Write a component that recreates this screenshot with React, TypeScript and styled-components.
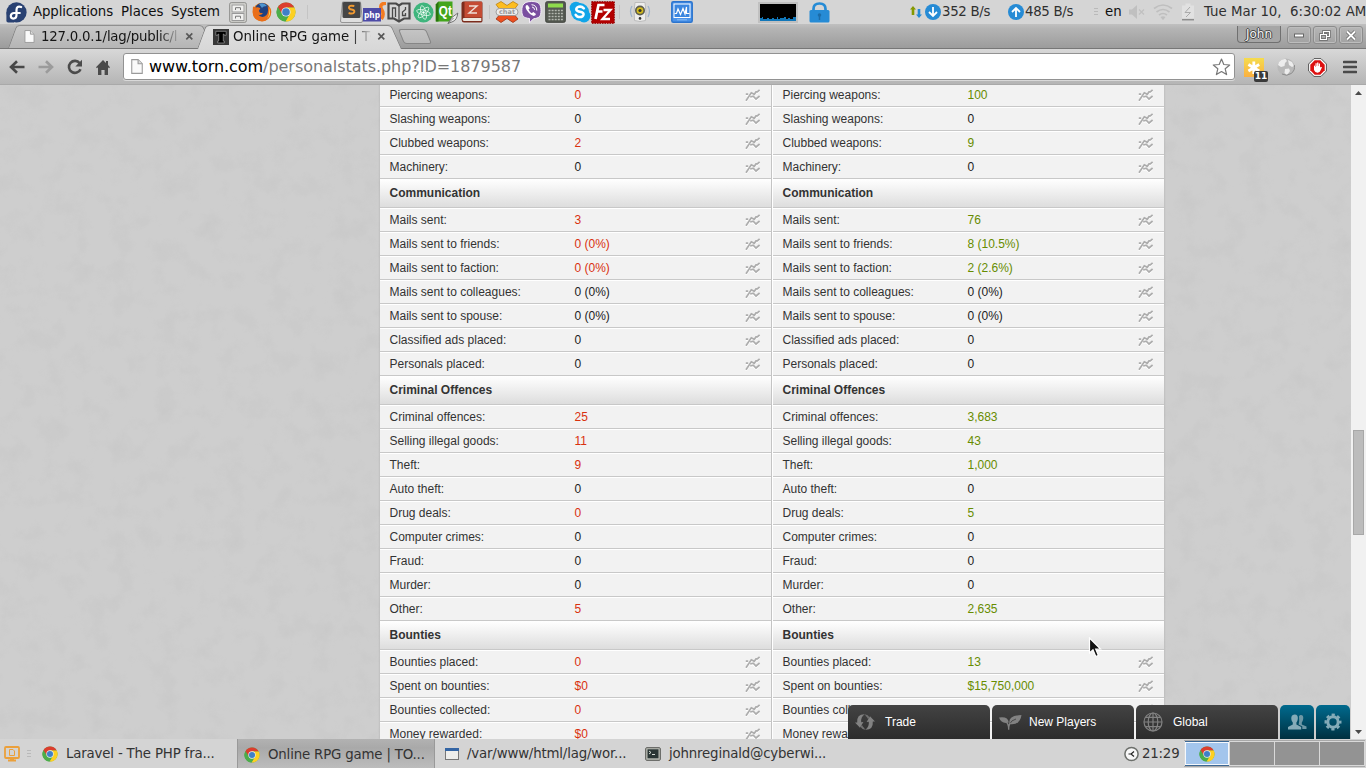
import React from "react";
import styled, { createGlobalStyle, css } from "styled-components";

const GlobalStyle = createGlobalStyle`
  * { box-sizing: border-box; }
  html, body { margin: 0; padding: 0; overflow: hidden; }
  svg { display: block; flex: none; }
`;

const Desktop = styled.div`
  width: 1366px;
  height: 768px;
  display: flex;
  flex-direction: column;
  position: relative;
  overflow: hidden;
  background: #d4d4d4;
  font-family: "DejaVu Sans", sans-serif;
  font-size: 13.33px;
  color: #222;
`;

/* ---------- desktop panels ---------- */

const TopPanel = styled.header`
  height: 24px;
  flex: none;
  display: flex;
  align-items: center;
  background: #d5d5d5;
`;

const Item = styled.div<{ $w: number; $gap?: number; $color?: string; $track?: number }>`
  width: ${(p) => p.$w}px;
  margin-left: ${(p) => p.$gap ?? 0}px;
  color: ${(p) => p.$color ?? "#101010"};
  letter-spacing: ${(p) => p.$track ?? 0}px;
  flex: none;
  white-space: nowrap;
  line-height: 24px;
`;

const PanelDivider = styled.i<{ $gap: number }>`
  width: 1px;
  height: 14px;
  margin-left: ${(p) => p.$gap}px;
  background: #c4c4c4;
  flex: none;
`;

const CpuGraph = styled.div`
  width: 40px;
  height: 21px;
  margin-left: 51px;
  border: 2px solid #c0c0c0;
  background: #000;
  flex: none;
`;

const BottomPanel = styled.footer`
  height: 29px;
  flex: none;
  display: flex;
  align-items: center;
  background: #d4d4d4;
`;

const Task = styled.div<{ $w: number; $active?: boolean; $gap?: number }>`
  width: ${(p) => p.$w}px;
  height: 29px;
  margin-left: ${(p) => p.$gap ?? 0}px;
  padding-left: 8px;
  display: flex;
  align-items: center;
  gap: 8px;
  flex: none;
  color: #333;
  white-space: nowrap;
  ${(p) =>
    p.$active &&
    css`
      padding-top: 2px;
      padding-left: 6px;
      background: linear-gradient(#b2b2b2, #a9a9a9 30%, #bcbcbc);
      border-left: 1px solid #999;
      border-right: 1px solid #999;
    `}
`;

const TaskText = styled.span`
  letter-spacing: -0.17px;
`;

const Pager = styled.div`
  display: flex;
  gap: 1px;
  width: 181px;
  height: 27px;
  padding: 1px;
  margin-left: 4px;
  background: #d9d9d9;
  border: 1px solid #a8a8a8;
  border-width: 1px 0;
`;

const Workspace = styled.div<{ $current?: boolean }>`
  flex: 1;
  display: flex;
  align-items: center;
  justify-content: center;
  background: ${(p) => (p.$current ? "#a3c5ec" : "#939393")};
  ${(p) =>
    p.$current &&
    css`
      box-shadow: inset 0 0 0 1px #f5f8fc, 0 -1px #3b6794, 0 1px #3b6794;
    `}
`;

/* ---------- browser chrome ---------- */

const TabStrip = styled.div`
  height: 25px;
  flex: none;
  display: flex;
  align-items: flex-end;
  background: linear-gradient(#c0c0c0, #b4b4b4 20%, #9c9c9c);
  border-bottom: 1px solid #777;
`;

const Tab = styled.div<{ $active?: boolean }>`
  position: relative;
  isolation: isolate;
  width: 205px;
  height: ${(p) => (p.$active ? 24 : 23)}px;
  margin: ${(p) => (p.$active ? "0 0 -1px -16px" : "0 0 0 8px")};
  padding: 0 10px 1px 16px;
  z-index: ${(p) => (p.$active ? 2 : 1)};
  display: flex;
  align-items: center;
  color: #151515;
  &::before,
  &::after {
    content: "";
    position: absolute;
    z-index: -1;
    top: 0;
    bottom: 0;
    background: ${(p) => (p.$active ? "linear-gradient(#e0e0e0, #d8d8d8)" : "linear-gradient(#c8c8c8, #b5b5b5)")};
    border-top: 1px solid ${(p) => (p.$active ? "#8a8a8a" : "#909090")};
  }
  &::before {
    left: 0;
    right: 50%;
    border-left: 1px solid #858585;
    border-top-left-radius: 4px;
    transform: skewX(-20deg);
    transform-origin: bottom left;
  }
  &::after {
    right: 0;
    left: 40%;
    border-right: 1px solid #858585;
    border-top-right-radius: 4px;
    transform: skewX(24deg);
    transform-origin: bottom right;
  }
`;

const TabTitle = styled.span<{ $gap: number; $track: number }>`
  width: 138px;
  margin-left: ${(p) => p.$gap}px;
  margin-right: 6px;
  overflow: hidden;
  white-space: nowrap;
  flex: none;
  letter-spacing: ${(p) => p.$track}px;
  mask-image: linear-gradient(90deg, #000 118px, transparent 140px);
`;

const NewTab = styled.div`
  width: 28px;
  height: 15px;
  margin: 0 0 4px -1px;
  background: linear-gradient(#c4c4c4, #b9b9b9);
  border: 1px solid #868686;
  border-radius: 3px;
  transform: skewX(22deg);
`;

const WindowButtons = styled.div`
  margin-left: auto;
  align-self: flex-start;
  display: flex;
  gap: 2px;
  padding: 2px 3px 0 0;
`;

const UserBadge = styled.div`
  width: 44px;
  height: 17px;
  margin-right: 4px;
  border: 1px solid #707070;
  border-top: 0;
  border-radius: 0 0 4px 4px;
  color: #f4f4f4;
  font: 12px/17px "DejaVu Sans", sans-serif;
  text-align: center;
  text-shadow: 0 1px #444, 1px 0 #444, -1px 0 #444, 0 -1px #444;
  background: #a6a6a6;
`;

const WinButton = styled.div`
  width: 24px;
  height: 18px;
  border: 1px solid #8c8c8c;
  border-radius: 3px;
  box-shadow: inset 0 0 0 1px #bdbdbd;
  display: flex;
  align-items: center;
  justify-content: center;
`;

const Toolbar = styled.div`
  height: 36px;
  flex: none;
  display: flex;
  align-items: center;
  padding: 1px 0 0 9px;
  background: linear-gradient(#d8d8d8, #b5b5b5);
  border-bottom: 1px solid #a9a9a9;
`;

const NavButtons = styled.div`
  display: flex;
  align-items: center;
  gap: 13px;
  width: 114px;
`;

const AddressBar = styled.div`
  width: 1112px;
  height: 27px;
  margin-bottom: 1px;
  display: flex;
  align-items: center;
  padding: 0 3px 0 7px;
  background: #fff;
  border: 1px solid #929292;
  border-radius: 3px;
  box-shadow: 0 1px #d9d9d9;
  font-size: 16px;
  letter-spacing: -0.045px;
  color: #000;
`;

const Url = styled.div`
  margin-left: 6px;
  flex: 1;
  span {
    color: #777;
  }
`;

const Extensions = styled.div`
  display: flex;
  align-items: center;
  margin-left: 9px;
`;

const ExtSlot = styled.div<{ $w: number }>`
  position: relative;
  width: ${(p) => p.$w}px;
`;

const ExtBadge = styled.span`
  position: absolute;
  left: 10px;
  top: 13px;
  width: 14px;
  height: 11px;
  border-radius: 2px;
  background: #3a3a3a;
  color: #fff;
  font: bold 9px/11px "DejaVu Sans", sans-serif;
  text-align: center;
`;

/* ---------- page ---------- */

const Viewport = styled.main`
  position: relative;
  height: 654px;
  flex: none;
  display: flex;
  overflow: hidden;
  background: #cecece;
`;

const Texture = styled.svg`
  position: absolute;
  inset: 0;
`;

const Stats = styled.section`
  position: relative;
  width: 784px;
  margin: -2px 0 0 380px;
  display: grid;
  grid-template-columns: 392px 392px;
  align-content: start;
  background: #f2f2f2;
  font: 12px/22px "Liberation Sans", Arial, sans-serif;
  color: #333;
  box-shadow: 0 0 2px #aaa;
`;

const Column = styled.div`
  & + & {
    border-left: 1px solid #fff;
  }
  &:first-child {
    border-right: 1px solid #c4c4c4;
  }
`;

const GroupTitle = styled.h2`
  margin: 0;
  height: 29px;
  padding: 0 9.5px;
  font-size: 12px;
  font-weight: bold;
  line-height: 28px;
  background: linear-gradient(#ffffff, #dddddd);
  border-bottom: 1px solid #c8c8c8;
`;

const Row = styled.div`
  height: 24px;
  display: flex;
  align-items: center;
  padding: 0 9.5px;
  border-top: 1px solid #fff;
  border-bottom: 1px solid #c8c8c8;
`;

const Label = styled.span`
  width: 185px;
  white-space: nowrap;
`;

type Tone = "bad" | "good" | "same";
const toneColor: Record<Tone, string> = { bad: "#d9310f", good: "#678c00", same: "#222" };

const Value = styled.span<{ $tone: Tone }>`
  width: 170.5px;
  color: ${(p) => toneColor[p.$tone]};
`;

const Scrollbar = styled.div`
  position: relative;
  margin-left: auto;
  width: 15px;
  height: 654px;
  display: flex;
  flex-direction: column;
  align-items: center;
  background: #f1f1f1;
`;

const Thumb = styled.div`
  width: 11px;
  height: 105px;
  margin-top: 330px;
  margin-bottom: auto;
  background: #bcbcbc;
  border: 1px solid #a8a8a8;
`;

const ChatBar = styled.div`
  position: absolute;
  z-index: 1;
  right: 16px;
  bottom: 0;
  display: flex;
  gap: 2px;
  font: 12px/34px "Liberation Sans", Arial, sans-serif;
  color: #fff;
`;

const ChatTab = styled.div`
  width: 142px;
  height: 34px;
  padding-left: 7px;
  display: flex;
  align-items: center;
  border-radius: 5px 5px 0 0;
  background: linear-gradient(#434343, #2c2c2c);
`;

const ChatIcon = styled.span`
  width: 30px;
`;

const ChatButton = styled.div`
  width: 34px;
  height: 34px;
  display: flex;
  align-items: center;
  justify-content: center;
  border-radius: 5px 5px 0 0;
  background: linear-gradient(#006a8e, #003040);
`;

const Pointer = styled.svg`
  position: absolute;
  left: 1088px;
  top: 637px;
`;

/* ---------- icons ---------- */

const Chrome = ({ size = 20 }: { size?: number }) => (
  <svg width={size} height={size} viewBox="0 0 20 20">
    <circle cx="10" cy="10" r="9.5" fill="#4cad4a" />
    <path d="M10 10 L1.8 5.2 A9.5 9.5 0 0 1 18.4 5.6 L10 5.6Z" fill="#dc3d2e" />
    <path d="M10 5.6 H18.4 A9.5 9.5 0 0 1 9.4 19.5 L14 12Z" fill="#fdd022" />
    <path d="M1.8 5.2 L6.2 12.4 L10 10 V5.6 H4Z" fill="#dc3d2e" />
    <path d="M1.8 5.2 L6.2 12.3 Q9 15.6 12.4 13.6 L9.4 19.5 A9.5 9.5 0 0 1 1.8 5.2Z" fill="#4cad4a" />
    <circle cx="10" cy="10" r="4.6" fill="#e9eef4" />
    <circle cx="10" cy="10" r="3.8" fill="#3f80c7" />
  </svg>
);

const Fedora = () => (
  <svg width="21" height="21" viewBox="0 0 21 21">
    <circle cx="10.5" cy="10.4" r="10.1" fill="#294172" />
    <path d="M.4 10.5 H8 V20.6 H2.2 Q.4 20.6 .4 18.8Z" fill="#294172" />
    <path d="M15.2 5 Q10.5 3.4 10.5 8 V12.8 Q10.5 16.6 7.3 16.6 Q4.6 16.3 4.8 13.6 Q5.2 11 8 11 H13.8" fill="none" stroke="#fff" strokeWidth="2.2" strokeLinecap="round" />
  </svg>
);

const Cabinet = () => (
  <svg width="18" height="21" viewBox="0 0 18 21">
    <rect x=".7" y=".7" width="16.6" height="19.6" rx="1.5" fill="#dadad6" stroke="#8b8b88" />
    <rect x="3" y="3" width="12" height="7" fill="#f1f1ef" stroke="#999" />
    <rect x="3" y="11.5" width="12" height="7" fill="#f1f1ef" stroke="#999" />
    <path d="M6.5 8 V5.7 H11.5 V8 M6.5 16.5 V14.2 H11.5 V16.5" fill="none" stroke="#777" />
  </svg>
);

const Firefox = () => (
  <svg width="20" height="20" viewBox="0 0 20 20">
    <circle cx="10" cy="10" r="9.3" fill="#e8801c" />
    <circle cx="10.2" cy="8.3" r="7.4" fill="#20417f" />
    <path d="M7 2 Q12 0 15 4 Q11 4 10 6Z" fill="#4d94cf" />
    <path d="M1 4.5 L3.8 5.5 Q6 4.5 8.4 6.2 L7 8.5 Q7 11.5 11 11 Q9 14 6 12.5 Q10 17 14.5 13 Q17 10 15.5 4 Q19 7 19 11 Q17.5 19 10 19.4 Q1 18.5 .7 10 Q.7 7 1 4.5Z" fill="#e96f1b" />
    <path d="M17 6 Q20 12 15 17 Q18 12 17 6Z" fill="#fcd34c" />
  </svg>
);

const Sublime = () => (
  <svg width="23" height="22" viewBox="0 0 23 22">
    <path d="M2.5 1 H20.5 L22.5 20 Q22.5 21.5 21 21.5 H2 Q.5 21.5 .5 20Z" fill="#dedede" stroke="#777" strokeWidth=".7" />
    <rect x="2.5" y="1" width="18" height="16" rx="1.5" fill="#454545" />
    <path d="M14.3 5 Q8.8 3.9 9 6.7 Q9.2 8.2 11.7 8.6 Q14.6 9.2 14.3 11 Q13.5 13.5 8.6 12" fill="none" stroke="#f29a31" strokeWidth="2" />
  </svg>
);

const PhpStorm = () => (
  <svg width="24" height="20" viewBox="0 0 24 20">
    <path d="M23 1.2 Q16.8 1.4 18 6.2 Q22 12 18.4 17" fill="none" stroke="#f47b20" strokeWidth="3.5" />
    <rect x="0" y="6" width="18" height="13.5" fill="#4d4ba7" />
    <text x="1" y="15.5" fontSize="9.5" fontWeight="bold" fontFamily="DejaVu Sans Condensed, DejaVu Sans, sans-serif" fill="#fff" textLength="16" lengthAdjust="spacingAndGlyphs">php</text>
  </svg>
);

const Book = () => (
  <svg width="24" height="22" viewBox="0 0 24 22">
    <path d="M1.5 2.5 H9 L12 4.5 L15 2.5 H22.5 V17.5 H17 L12 20.5 L7 17.5 H1.5Z" fill="#d5d5d5" stroke="#4a4a4a" strokeWidth="2.2" />
    <path d="M12 4 V20 M5.5 17 V7 H8.5 V16 M18.5 6 V8.5 L15.5 11 V14.5 H18.5 V12" fill="none" stroke="#4a4a4a" strokeWidth="1.3" />
  </svg>
);

const Atom = () => (
  <svg width="21" height="21" viewBox="0 0 21 21">
    <circle cx="10.5" cy="10.5" r="10" fill="#3fb57d" />
    <g fill="none" stroke="#e7f8ef" strokeWidth=".8">
      <ellipse cx="10.5" cy="10.5" rx="7" ry="2.5" transform="rotate(15 10.5 10.5)" />
      <ellipse cx="10.5" cy="10.5" rx="7" ry="2.5" transform="rotate(75 10.5 10.5)" />
      <ellipse cx="10.5" cy="10.5" rx="7" ry="2.5" transform="rotate(135 10.5 10.5)" />
    </g>
    <circle cx="10.5" cy="10.5" r="1.2" fill="#fff" />
  </svg>
);

const Qt = () => (
  <svg width="24" height="23" viewBox="0 0 24 23">
    <path d="M3.5 .5 H17.5 V17.5 L15 20.5 H.8 V3.5Z" fill="#43a51c" />
    <path d="M.8 3.5 L3.5 .5 V20.5 H.8Z" fill="#28740e" />
    <text x="3.8" y="15.4" fontSize="14" fontWeight="bold" fontFamily="Liberation Sans, sans-serif" fill="#fff" textLength="13" lengthAdjust="spacingAndGlyphs">Qt</text>
    <path d="M22.8 12 Q22 19 18 20.5 L13 22.5 L16.5 16.8Z" fill="#ececec" stroke="#666" strokeWidth=".9" />
    <path d="M13 22.5 L18.5 17" stroke="#666" strokeWidth=".8" />
  </svg>
);

const ZBook = () => (
  <svg width="22" height="22" viewBox="0 0 22 22">
    <path d="M2.5 .5 H20 Q21.5 .5 21.5 2 V19.5 Q21.5 21.5 20 21.5 H3 Q.5 21 .5 18.5 V2.5 Q.5 .5 2.5 .5Z" fill="#7c2c1d" />
    <path d="M2.5 17 H20.3 V20 H3 Q1.6 20 1.6 18Z" fill="#ece7df" />
    <path d="M3.5 .7 H21 V16.5 H3.5Z" fill="#c44b33" />
    <path d="M8 5 H16 L8 12 H16" fill="none" stroke="#eedfd8" strokeWidth="1.4" />
  </svg>
);

const XChat = () => (
  <svg width="24" height="22" viewBox="0 0 24 22">
    <path d="M1 3.5 L6 .5 L12 4.5 L18 .5 L23 3.5 L18 10 H6Z" fill="#fdbd20" stroke="#bb8113" strokeWidth=".8" />
    <path d="M6 12 H18 L23 18 L18 21.5 L12 17.5 L6 21.5 L1 18Z" fill="#ee5020" stroke="#9c3315" strokeWidth=".8" />
    <rect x="1" y="7.5" width="22" height="7" rx="3.5" fill="#ececec" stroke="#8f8f8f" strokeWidth=".8" />
    <text x="4" y="13" fontSize="6.5" fontWeight="bold" fontFamily="DejaVu Sans, sans-serif" fill="#999" textLength="16">chat</text>
  </svg>
);

const Viber = () => (
  <svg width="21" height="22" viewBox="0 0 21 22">
    <path d="M10.5 .5 C18 .5 20 3 20 9.5 S18 17 12.5 17.8 L8.5 21.8 V17.5 C2.5 17 .8 15 .8 9.5 S3 .5 10.5 .5Z" fill="#7a4fa0" stroke="#f4edf8" />
    <path d="M5 4.5 Q3.8 6 6 9.5 Q9.3 14.2 12.8 15 Q14.6 14.7 15 13 L12.3 11 L10.7 12.2 Q8.5 11 7.5 8.5 L8.8 7.3 L7 4.4 Q6 3.7 5 4.5Z" fill="#fff" />
    <path d="M10.5 3.7 Q15.8 4 15.8 9.5 M11 6 Q13.4 6.2 13.6 8.8" fill="none" stroke="#fff" />
  </svg>
);

const Calculator = () => (
  <svg width="21" height="22" viewBox="0 0 21 22">
    <rect x=".7" y=".7" width="19.6" height="20.6" rx="1.5" fill="#555a52" stroke="#3f433d" />
    <rect x="3" y="2.5" width="15" height="4" fill="#8fdc4c" />
    <path d="M3.5 9.5 H18 M3.5 12.5 H18 M3.5 15.5 H18 M3.5 18.5 H18" stroke="#b4b8b0" strokeWidth="1.7" strokeDasharray="2 1.1" />
  </svg>
);

const Skype = () => (
  <svg width="22" height="22" viewBox="0 0 22 22">
    <circle cx="7" cy="7" r="6.3" fill="#12a5e8" />
    <circle cx="15" cy="15" r="6.4" fill="#12a5e8" />
    <circle cx="11" cy="11" r="9" fill="#12a5e8" />
    <path d="M14.8 7.3 Q12.8 5.2 9.8 5.8 Q6.8 6.6 7.4 8.8 Q8 10.4 11 10.8 Q14.7 11.4 14.5 13.4 Q14 16 10.8 16 Q8 16 6.7 13.8" fill="none" stroke="#fff" strokeWidth="2.6" strokeLinecap="round" />
  </svg>
);

const FileZilla = () => (
  <svg width="24" height="23" viewBox="0 0 24 23">
    <rect x=".7" y=".7" width="22.6" height="21.6" fill="#b30000" stroke="#920000" strokeDasharray="1.5 1" />
    <path d="M13.5 4 H7.5 L4.5 18 M6.3 10.5 H11.5" fill="none" stroke="#fff" strokeWidth="2.7" />
    <path d="M12.5 9 H19.5 L11.5 18 H19" fill="none" stroke="#fff" strokeWidth="2.3" />
  </svg>
);

const Speaker = () => (
  <svg width="22" height="22" viewBox="0 0 22 22">
    <path d="M3 5 Q0 10 3 16 M19 5 Q22 10 19 16" fill="none" stroke="#9fb3cc" strokeWidth="1.3" />
    <path d="M6 1.5 H16 Q17.5 10 16.5 19.5 Q11 21.5 5.5 19.5 Q4.5 10 6 1.5Z" fill="#ededed" stroke="#bbb" />
    <circle cx="11" cy="9.5" r="5" fill="#5d5d50" />
    <circle cx="11" cy="9.5" r="3.3" fill="#d4bc1d" />
    <circle cx="11" cy="9.5" r="1.6" fill="#33332b" />
    <circle cx="11" cy="17.4" r="1.3" fill="#333" />
  </svg>
);

const Monitor = () => (
  <svg width="22" height="22" viewBox="0 0 22 22">
    <rect x=".8" y=".8" width="20.4" height="20.4" rx="1.5" fill="#4a93ea" stroke="#2c74cd" strokeWidth="1.5" />
    <rect x="3" y="3" width="16" height="13.5" fill="#3b86df" stroke="#fff" />
    <path d="M3.5 12.5 H5.5 L7 8 L9.5 13.5 L12 7.5 L14 13 L15.5 6 V12.5 H18.5" fill="none" stroke="#fff" strokeWidth="1.2" />
    <path d="M6 18.8 H16" stroke="#8bbef5" />
  </svg>
);

const Lock = () => (
  <svg width="21" height="21" viewBox="0 0 21 21">
    <path d="M4.5 10 V7 Q4.5 1.5 10.5 1.5 T16.5 7 V10" fill="none" stroke="#268bd5" strokeWidth="2.7" />
    <rect x=".5" y="8" width="20" height="12.5" rx="1.5" fill="#268bd5" />
    <circle cx="10.5" cy="13" r="1.8" fill="#1c6ca8" />
    <path d="M10.5 14 V18" stroke="#1c6ca8" strokeWidth="1.5" />
  </svg>
);

const RoundArrow = ({ up }: { up?: boolean }) => (
  <svg width="16" height="16" viewBox="0 0 16 16">
    <circle cx="8" cy="8" r="8" fill="#268bd5" />
    <path d={up ? "M8 13 V4 M4 8 L8 4 L12 8" : "M8 3 V12 M4 8 L8 12 L12 8"} fill="none" stroke="#fff" strokeWidth="1.8" />
  </svg>
);

const NetArrows = () => (
  <svg width="12" height="12" viewBox="0 0 12 12">
    <path d="M3 0 L6 3.5 H4.3 V9 H1.7 V3.5 H0Z" fill="#859900" />
    <path d="M9 12 L12 8.5 H10.3 V3 H7.7 V8.5 H6Z" fill="#268bd5" />
  </svg>
);

const Grip = () => (
  <svg width="4" height="8" viewBox="0 0 4 8">
    <path d="M0 .5 H4 M0 3.5 H4 M0 6.5 H4" stroke="#b9b9b9" />
  </svg>
);

const Muted = () => (
  <svg width="16" height="14" viewBox="0 0 16 14">
    <path d="M0 4.5 H3 L8 0 V14 L3 9.5 H0Z" fill="#c0c0c0" />
    <path d="M10 4.5 L15 9.5 M15 4.5 L10 9.5" stroke="#c0c0c0" strokeWidth="1.3" />
  </svg>
);

const Wifi = () => (
  <svg width="20" height="17" viewBox="0 0 20 17">
    <path d="M1 4.5 Q10 -2.5 19 4.5 M3.5 8 Q10 3 16.5 8 M6 11 Q10 8 14 11" fill="none" stroke="#bfbfbf" strokeWidth="1.7" />
    <path d="M7.5 13 Q10 11.4 12.5 13 L10 16.3Z" fill="#bfbfbf" />
  </svg>
);

const Battery = () => (
  <svg width="12" height="18" viewBox="0 0 12 18">
    <path d="M3.5 2.5 V.5 H8.5 V2.5 H12 V15.5 H0 V2.5Z" fill="#e1e1e1" />
    <path d="M8 4 L3 9.5 H8.5 L4 14" fill="none" stroke="#aaa" />
    <path d="M0 16.7 H12" stroke="#8c8c8c" strokeWidth="1.5" />
  </svg>
);

const PageIcon = ({ w = 11, h = 13 }: { w?: number; h?: number }) => (
  <svg width={w} height={h} viewBox="0 0 11 14">
    <path d="M.6 .6 H6.5 L10.4 4.5 V13.4 H.6Z" fill="#fafafa" stroke="#9a9a9a" />
    <path d="M6.5 .6 V4.5 H10.4" fill="#ddd" stroke="#9a9a9a" />
  </svg>
);

const TornIcon = () => (
  <svg width="16" height="16" viewBox="0 0 16 16">
    <rect width="16" height="16" fill="#383838" />
    <path d="M2.8 2.3 H13.2 V6.3 H11.3 L10.8 5 H10.3 V12 H11.3 V14 H4.7 V12 H5.7 V5 H5.2 L4.7 6.3 H2.8Z" fill="#000" stroke="#8d8d8d" strokeWidth=".8" />
  </svg>
);

const CloseX = () => (
  <svg width="9" height="9" viewBox="0 0 9 9">
    <path d="M1.3 1.3 L7.3 7.3 M7.3 1.3 L1.3 7.3" stroke="#585858" strokeWidth="1.7" />
  </svg>
);

const NavArrow = ({ forward }: { forward?: boolean }) => (
  <svg width="16" height="14" viewBox="0 0 16 14">
    <path
      d={forward ? "M.5 7 H14 M8 1.2 L14 7 L8 12.8" : "M15.5 7 H2 M8 1.2 L2 7 L8 12.8"}
      fill="none"
      stroke={forward ? "#9b9b9b" : "#484848"}
      strokeWidth="2.6"
    />
  </svg>
);

const Reload = () => (
  <svg width="16" height="16" viewBox="0 0 16 16">
    <path d="M12.7 4.2 A6 6 0 1 0 13.5 10.2" fill="none" stroke="#4b4b4b" strokeWidth="2.6" />
    <path d="M15 .8 V7.6 H8.3Z" fill="#4b4b4b" />
  </svg>
);

const Home = () => (
  <svg width="14" height="15" viewBox="0 0 14 15">
    <path d="M7 0 L10 3 V1 H12 V5 L14 7.3 L13 8.2 L12 7.3 V15 H8.6 V10 H5.4 V15 H2 V7.3 L1 8.2 L0 7.3Z" fill="#4b4b4b" />
  </svg>
);

const Star = () => (
  <svg width="19" height="18" viewBox="0 0 19 18">
    <path d="M9.5 1 L11.8 6.5 L17.7 7 L13.2 10.8 L14.6 16.6 L9.5 13.5 L4.4 16.6 L5.8 10.8 L1.3 7 L7.2 6.5Z" fill="#fff" stroke="#777" strokeWidth="1.2" strokeLinejoin="round" />
  </svg>
);

const Asterisk = () => (
  <svg width="20" height="19" viewBox="0 0 20 19">
    <defs>
      <linearGradient id="amber" x2="0" y2="1">
        <stop stopColor="#f5dc4e" />
        <stop offset="1" stopColor="#fbb040" />
      </linearGradient>
    </defs>
    <rect width="20" height="19" fill="url(#amber)" />
    <path d="M9.8 3.5 V16 M4.4 6.5 L15.2 13 M15.2 6.5 L4.4 13" stroke="#fff" strokeWidth="2.8" />
  </svg>
);

const Globe = () => (
  <svg width="18" height="18" viewBox="0 0 18 18">
    <circle cx="9" cy="9" r="8.6" fill="#b9b9b9" />
    <path d="M2 4 Q5 .5 8.5 1 L10 3 L8 5 L7.5 8 L4 9 L1 7Z M11 2 L15 4 L17 8 L15 9 L12 7Z M8 11 L12 10.5 L13 13 L10 17 L7.5 15Z" fill="#ededed" />
    <path d="M17.3 7 A8.3 8.3 0 0 1 5 16" fill="none" stroke="#8b8b8b" />
  </svg>
);

const Adblock = () => (
  <svg width="19" height="19" viewBox="0 0 19 19">
    <path d="M6 .6 H13 L18.4 6 V13 L13 18.4 H6 L.6 13 V6Z" fill="#fff" stroke="#555" />
    <path d="M6.7 2.3 H12.3 L16.7 6.7 V12.3 L12.3 16.7 H6.7 L2.3 12.3 V6.7Z" fill="#dd1010" />
    <path d="M6 8 V12 Q7 14.7 9.5 14.7 Q12 14.6 12.5 12.5 L14 9.3 L12.7 8.7 L12 9.7 V5.5 H10.8 V8 H10.4 V4.5 H9.1 V8 H8.7 V5.2 H7.5 V9 H7.1 V7.3Z" fill="#fff" />
  </svg>
);

const Menu = () => (
  <svg width="14" height="14" viewBox="0 0 14 14">
    <path d="M1 2 H13 M1 7 H13 M1 12 H13" stroke="#4a4a4a" strokeWidth="2.7" strokeLinecap="round" />
  </svg>
);

const GraphIcon = () => (
  <svg width="16" height="13" viewBox="0 0 16 13">
    <path d="M1 11.8 L6.3 3.8 L9.3 5.3 L11 2.9 H12.3 L14.6 .8 M.8 5.2 H3.5 M5.5 8 L8.2 7.4 L11 10 L14.6 7" transform="translate(0 1.2)" fill="none" stroke="#fff" strokeWidth="1.5" />
    <path d="M1 11.8 L6.3 3.8 L9.3 5.3 L11 2.9 H12.3 L14.6 .8" fill="none" stroke="#adadad" strokeWidth="1.7" />
    <path d="M.8 5.2 H3.2 M5.2 8 L8.2 7.2 L11 10 L14.6 7" fill="none" stroke="#adadad" strokeWidth="1.7" />
  </svg>
);

const TradeIcon = () => (
  <svg width="20" height="18" viewBox="0 0 20 18">
    <path d="M9.8 1.2 Q1.5 1 2.2 9.5 L0 9.5 L5 14.8 L8.4 9 L6.2 9.2 Q5.6 3.8 9.8 1.2Z" fill="#828282" />
    <path d="M10.2 16.8 Q18.5 17 17.8 8.5 L20 8.5 L15 3.2 L11.6 9 L13.8 8.8 Q14.4 14.2 10.2 16.8Z" fill="#828282" />
    <path d="M5.2 13.5 Q7 16.3 10.2 16.8 L9 14.8 Q8 14.3 7 12Z M14.8 4.5 Q13 1.7 9.8 1.2 L11 3.2 Q12 3.7 13 6Z" fill="#707070" />
  </svg>
);

const LeafIcon = () => (
  <svg width="23" height="15" viewBox="0 0 23 15">
    <path d="M0 2.5 Q9 1 9.8 7.5 Q2.5 9.5 0 2.5Z" fill="#828282" />
    <path d="M22.5 0 Q21 10.5 10.5 9 Q8.5 .5 22.5 0Z" fill="#828282" />
    <path d="M11 8.5 Q12 5.5 17 4" fill="none" stroke="#4b4b4b" />
    <path d="M9.7 14.8 Q9.4 10 11.5 8 M9.7 14 Q9.8 9 6.5 6" fill="none" stroke="#828282" strokeWidth="1.4" />
  </svg>
);

const GlobalIcon = () => (
  <svg width="20" height="20" viewBox="0 0 20 20">
    <g fill="none" stroke="#828282" strokeWidth="1.2">
      <circle cx="10" cy="10" r="9" />
      <ellipse cx="10" cy="10" rx="4.8" ry="9" />
      <path d="M10 1 V19 M1 10 H19 M2.7 5.3 H17.3 M2.7 14.7 H17.3" />
    </g>
  </svg>
);

const PeopleIcon = () => (
  <svg width="19" height="16" viewBox="0 0 19 16">
    <path d="M12.4 1 Q15.8 .6 15.2 5 Q14.8 7.4 13.8 8.4 V10.4 L18.5 12.5 V15 H14.3 V12.6 L10.6 10.6 Q11.6 7 11 2Z" fill="#6d97a5" />
    <path d="M6.5 .5 Q10.3 .3 9.8 5 Q9.4 7.6 8.4 8.6 V10.5 L13.2 13 V15.5 H0 V13 L4.8 10.5 V8.6 Q3.6 7.6 3.3 5 Q2.9 .8 6.5 .5Z" fill="#84abb8" />
  </svg>
);

const GearIcon = () => (
  <svg width="18" height="18" viewBox="0 0 18 18">
    <circle cx="9" cy="9" r="5.2" fill="none" stroke="#84abb8" strokeWidth="3" />
    <circle cx="9" cy="9" r="7.3" fill="none" stroke="#84abb8" strokeWidth="2.4" strokeDasharray="3.2 2.533" strokeDashoffset="1.6" />
  </svg>
);

const ShowDesktop = () => (
  <svg width="16" height="16" viewBox="0 0 16 16">
    <rect x="1" y="1" width="14" height="11" rx="1" fill="none" stroke="#eba03b" strokeWidth="1.8" />
    <path d="M5.5 3.5 H9 L10.5 5 V9.5 H5.5Z" fill="none" stroke="#eba03b" />
    <path d="M6 12 H10 V13.5 H12 V15.5 H4 V13.5 H6Z" fill="#eba03b" />
  </svg>
);

const WindowIcon = () => (
  <svg width="14" height="12" viewBox="0 0 14 12">
    <rect x=".5" y=".5" width="13" height="11" fill="#eeeeec" stroke="#777" />
    <path d="M0 1.5 H14" stroke="#3465a4" strokeWidth="3" />
  </svg>
);

const TerminalIcon = () => (
  <svg width="16" height="14" viewBox="0 0 16 14">
    <rect x=".7" y=".7" width="14.6" height="12.6" rx="1" fill="#babdb6" stroke="#555753" />
    <rect x="2.5" y="2.3" width="11" height="9" fill="#2a3635" />
    <path d="M4 4 L6 5.5 L4 7 M7 7.5 H10" fill="none" stroke="#e8eee8" strokeWidth=".9" />
  </svg>
);

const ClockIcon = () => (
  <svg width="15" height="16" viewBox="0 0 15 16">
    <circle cx="7.5" cy="8" r="6.6" fill="#f7f7f7" stroke="#6c6f6b" strokeWidth="1.5" />
    <path d="M10 5.5 L7 8 L10 10.5 M4.5 8 H7.5" fill="none" stroke="#222" strokeWidth="1.2" />
  </svg>
);

const ScrollArrow = ({ down }: { down?: boolean }) => (
  <svg width="15" height="15" viewBox="0 0 15 15">
    <path d={down ? "M4 6 H11 L7.5 10Z" : "M4 10 H11 L7.5 6Z"} fill="#4b4b4b" />
  </svg>
);

/* ---------- data ---------- */

type Stat = [label: string, mine: string, mineTone: Tone, theirs: string, theirTone: Tone];
interface Group {
  title?: string;
  graph: boolean;
  rows: Stat[];
}

const groups: Group[] = [
  {
    graph: true,
    rows: [
      ["Piercing weapons:", "0", "bad", "100", "good"],
      ["Slashing weapons:", "0", "same", "0", "same"],
      ["Clubbed weapons:", "2", "bad", "9", "good"],
      ["Machinery:", "0", "same", "0", "same"],
    ],
  },
  {
    title: "Communication",
    graph: true,
    rows: [
      ["Mails sent:", "3", "bad", "76", "good"],
      ["Mails sent to friends:", "0 (0%)", "bad", "8 (10.5%)", "good"],
      ["Mails sent to faction:", "0 (0%)", "bad", "2 (2.6%)", "good"],
      ["Mails sent to colleagues:", "0 (0%)", "same", "0 (0%)", "same"],
      ["Mails sent to spouse:", "0 (0%)", "same", "0 (0%)", "same"],
      ["Classified ads placed:", "0", "same", "0", "same"],
      ["Personals placed:", "0", "same", "0", "same"],
    ],
  },
  {
    title: "Criminal Offences",
    graph: false,
    rows: [
      ["Criminal offences:", "25", "bad", "3,683", "good"],
      ["Selling illegal goods:", "11", "bad", "43", "good"],
      ["Theft:", "9", "bad", "1,000", "good"],
      ["Auto theft:", "0", "same", "0", "same"],
      ["Drug deals:", "0", "bad", "5", "good"],
      ["Computer crimes:", "0", "same", "0", "same"],
      ["Fraud:", "0", "same", "0", "same"],
      ["Murder:", "0", "same", "0", "same"],
      ["Other:", "5", "bad", "2,635", "good"],
    ],
  },
  {
    title: "Bounties",
    graph: true,
    rows: [
      ["Bounties placed:", "0", "bad", "13", "good"],
      ["Spent on bounties:", "$0", "bad", "$15,750,000", "good"],
      ["Bounties collected:", "0", "bad", "0", "good"],
      ["Money rewarded:", "$0", "bad", "$0", "good"],
    ],
  },
];

const StatColumn = ({ side }: { side: "mine" | "theirs" }) => (
  <Column>
    {groups.map((group, i) => (
      <React.Fragment key={i}>
        {group.title && <GroupTitle>{group.title}</GroupTitle>}
        {group.rows.map(([label, mine, mineTone, theirs, theirTone]) => (
          <Row key={label}>
            <Label>{label}</Label>
            <Value $tone={side === "mine" ? mineTone : theirTone}>{side === "mine" ? mine : theirs}</Value>
            {group.graph && <GraphIcon />}
          </Row>
        ))}
      </React.Fragment>
    ))}
  </Column>
);

const App = () => (
  <Desktop>
    <GlobalStyle />
    <TopPanel>
      <Item $gap={6} $w={21}><Fedora /></Item>
      <Item $gap={6} $w={88} $track={-0.12}>Applications</Item>
      <Item $w={50}>Places</Item>
      <Item $w={58} $track={-0.15}>System</Item>
      <Item $w={18}><Cabinet /></Item>
      <Item $gap={5} $w={20}><Firefox /></Item>
      <Item $gap={4} $w={20}><Chrome /></Item>
      <PanelDivider $gap={11} />
      <Item $gap={32} $w={23}><Sublime /></Item>
      <Item $w={24}><PhpStorm /></Item>
      <Item $w={24}><Book /></Item>
      <Item $gap={2} $w={21}><Atom /></Item>
      <Item $gap={1} $w={24}><Qt /></Item>
      <Item $gap={2} $w={22}><ZBook /></Item>
      <PanelDivider $gap={6} />
      <Item $gap={5} $w={24}><XChat /></Item>
      <Item $gap={2} $w={21}><Viber /></Item>
      <Item $gap={3} $w={21}><Calculator /></Item>
      <Item $gap={3} $w={22}><Skype /></Item>
      <Item $w={24}><FileZilla /></Item>
      <PanelDivider $gap={4} />
      <Item $gap={9} $w={22}><Speaker /></Item>
      <Item $gap={20} $w={22}><Monitor /></Item>
      <Item $gap={14} $w={0} />
      <CpuGraph>
        <svg width="36" height="17" viewBox="0 0 36 17">
          <path d="M0 17 V14 H2 V13 H3 V15 H7 V14 H9 V15 H12 V14 H14 V15 H17 V13 H18 V15 H20 V14 H24 V13 H26 V15 H28 V14 H30 V15 H33 V13 H36 V17Z" fill="#1177b9" />
        </svg>
      </CpuGraph>
      <Item $gap={11} $w={21}><Lock /></Item>
      <Item $gap={80} $w={12}><NetArrows /></Item>
      <Item $gap={3} $w={16}><RoundArrow /></Item>
      <Item $gap={1} $w={66} $color="#303030" $track={-0.3}>352 B/s</Item>
      <Item $w={16}><RoundArrow up /></Item>
      <Item $gap={1} $w={69} $color="#303030" $track={-0.3}>485 B/s</Item>
      <Item $w={11}><Grip /></Item>
      <Item $w={24}>en</Item>
      <Item $w={24}><Muted /></Item>
      <Item $w={29}><Wifi /></Item>
      <Item $w={22}><Battery /></Item>
      <Item $w={160} $color="#303030">Tue Mar 10,&nbsp; 6:30:02 AM</Item>
    </TopPanel>

    <TabStrip>
      <Tab>
        <PageIcon />
        <TabTitle $gap={6} $track={-0.22}>127.0.0.1/lag/public/l</TabTitle>
        <CloseX />
      </Tab>
      <Tab $active>
        <TornIcon />
        <TabTitle $gap={4} $track={-0.05}>Online RPG game | TO</TabTitle>
        <CloseX />
      </Tab>
      <NewTab />
      <WindowButtons>
        <UserBadge>John</UserBadge>
        <WinButton>
          <svg width="12" height="10" viewBox="0 0 12 10"><path d="M1 5.5 H11" stroke="#666" strokeWidth="4" /><path d="M2 5.5 H10" stroke="#fff" strokeWidth="2" /></svg>
        </WinButton>
        <WinButton>
          <svg width="12" height="11" viewBox="0 0 12 11"><path d="M4.5 4 V1.5 H10.5 V6.5 H8 M1.5 4.5 H7.5 V9.5 H1.5Z" fill="none" stroke="#666" strokeWidth="2.6" /><path d="M4.5 4 V1.5 H10.5 V6.5 H8 M1.5 4.5 H7.5 V9.5 H1.5Z" fill="none" stroke="#fff" strokeWidth="1.2" /></svg>
        </WinButton>
        <WinButton>
          <svg width="12" height="11" viewBox="0 0 12 11"><path d="M2 1.5 L10 9.5 M10 1.5 L2 9.5" stroke="#666" strokeWidth="3.4" /><path d="M2 1.5 L10 9.5 M10 1.5 L2 9.5" stroke="#fff" strokeWidth="1.8" /></svg>
        </WinButton>
      </WindowButtons>
    </TabStrip>

    <Toolbar>
      <NavButtons>
        <NavArrow />
        <NavArrow forward />
        <Reload />
        <Home />
      </NavButtons>
      <AddressBar>
        <PageIcon w={12} h={15} />
        <Url>www.torn.com<span>/personalstats.php?ID=1879587</span></Url>
        <Star />
      </AddressBar>
      <Extensions>
        <ExtSlot $w={33}><Asterisk /><ExtBadge>11</ExtBadge></ExtSlot>
        <ExtSlot $w={31}><Globe /></ExtSlot>
        <ExtSlot $w={35}><Adblock /></ExtSlot>
        <Menu />
      </Extensions>
    </Toolbar>

    <Viewport>
      <Texture width="1366" height="654">
        <filter id="concrete">
          <feTurbulence type="fractalNoise" baseFrequency="0.045" numOctaves="5" seed="8" />
          <feColorMatrix values="0 0 0 0 0.45  0 0 0 0 0.45  0 0 0 0 0.45  0.9 0 0 0 -0.4" />
        </filter>
        <rect width="1366" height="654" filter="url(#concrete)" opacity="0.4" />
      </Texture>
      <Stats>
        <StatColumn side="mine" />
        <StatColumn side="theirs" />
      </Stats>
      <ChatBar>
        <ChatTab><ChatIcon><TradeIcon /></ChatIcon>Trade</ChatTab>
        <ChatTab><ChatIcon><LeafIcon /></ChatIcon>New Players</ChatTab>
        <ChatTab><ChatIcon><GlobalIcon /></ChatIcon>Global</ChatTab>
        <ChatButton><PeopleIcon /></ChatButton>
        <ChatButton><GearIcon /></ChatButton>
      </ChatBar>
      <Scrollbar>
        <ScrollArrow />
        <Thumb />
        <ScrollArrow down />
      </Scrollbar>
    </Viewport>

    <BottomPanel>
      <Item $gap={4} $w={23}><ShowDesktop /></Item>
      <Item $w={7}><Grip /></Item>
      <Task $w={203}><Chrome size={16} /><TaskText>Laravel - The PHP fra...</TaskText></Task>
      <Task $w={198} $active><Chrome size={16} /><TaskText>Online RPG game | TO...</TaskText></Task>
      <Task $w={200} $gap={2}><WindowIcon /><TaskText>/var/www/html/lag/wor...</TaskText></Task>
      <Task $w={200}><TerminalIcon /><TaskText>johnreginald@cyberwi...</TaskText></Task>
      <Item $gap={287} $w={18}><ClockIcon /></Item>
      <Item $w={38} $color="#333" $track={-0.2}>21:29</Item>
      <Pager>
        <Workspace $current><Chrome size={16} /></Workspace>
        <Workspace />
        <Workspace />
        <Workspace />
      </Pager>
    </BottomPanel>

    <Pointer width="14" height="22" viewBox="0 0 14 22">
      <path d="M1.5 1 V16 L5 12.8 L7.8 19.5 L10.4 18.4 L7.7 12 H12.5Z" fill="#111" stroke="#fff" strokeWidth="1.2" />
    </Pointer>
  </Desktop>
);

export default App;
